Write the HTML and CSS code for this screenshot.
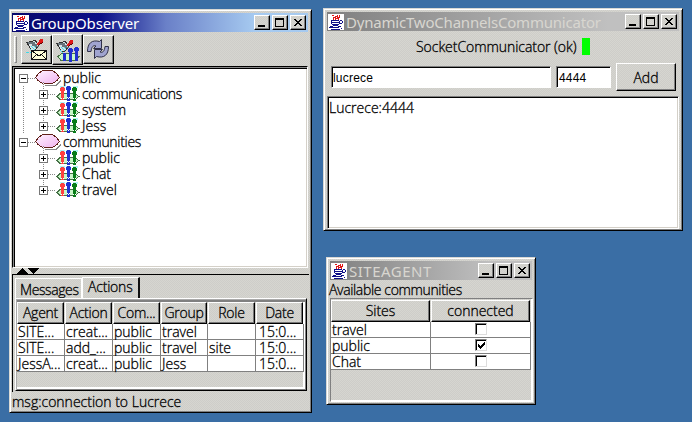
FILE: index.html
```html
<!DOCTYPE html>
<html lang="en">
<head>
<meta charset="utf-8">
<title>GroupObserver</title>
<link rel="stylesheet" href="styles.css">
</head>
<body>
<svg class="defs" aria-hidden="true">
  <symbol id="java" viewBox="0 0 16 16">
    <path fill="#fff" d="M0 0h16v16H0z"/>
    <path fill="none" stroke="#e01818" d="M5 5.5V3.5h2v-1h2v-2M7 5.5v-1h2v-1h2v-3M4 1.5h2M10 5.5v-1h1"/>
    <path fill="none" stroke="#101088" d="M3 6.5h8M3.5 7v3M4 8.5h7M11.500 7v3M4 10.500h7M5 11.500h5M12 6.500h2M14.500 7v2M12 9.500h2M1.500 12.500h3M1 13.500h3M10 12.500h3M4 13.500h7M3 15.500h9M13 14.500h1"/>
  </symbol>
  <symbol id="min" viewBox="0 0 16 14"><path d="M4 9h7v2H4z"/></symbol>
  <symbol id="max" viewBox="0 0 16 14"><path fill-rule="evenodd" d="M3 2h9v9H3zM4 4h7v6H4z"/></symbol>
  <symbol id="close" viewBox="0 0 16 14"><path d="M4 3h2v1h1v1h2V4h1V3h2v1h-1v1h-1v1H9v1h1v1h1v1h1v1h-2V9H9V8H7v1H6v1H4V9h1V8h1V7h1V6H6V5H5V4H4z"/></symbol>
  <symbol id="oval" viewBox="0 0 26 16">
    <path fill="#888" d="M3 9l7 6h10l6-6v2l-5 5H11z"/>
    <path fill="url(#pink)" stroke="#602018" d="M.5 7.500C3 3.500 6 .5 10 .5H15C19 .5 22 3.500 24.500 7.500C22 11 19 13.500 15 13.500H10C6 13.500 3 11 .5 7.500z"/>
  </symbol>
  <linearGradient id="pink" x2="1" y2="1"><stop stop-color="#fff4ff"/><stop offset="1" stop-color="#efb0ef"/></linearGradient>
  <symbol id="group" viewBox="0 0 24 16">
    <path fill="#c8f8c8" stroke="#467046" d="M1 10.500l3-3h15l4 3-4 3H4z"/>
    <path fill="#b0f4f4" d="M4 0h5v2H4zM10 0h5v1h-5zM17 0h5v2h-5z"/>
    <path fill="#ff4040" d="M5 1h3v1h1v3H8v9H5V5H4V2h1z"/>
    <path fill="#2030d0" d="M11 0h3v1h1v3h-1v11h-3V4h-1V1h1z"/>
    <path fill="#087c18" d="M17 1h3v1h1v3h-1v10h-3V5h-1V2h1z"/>
    <path fill="#fff" d="M11 11h1v1h-1zM13 11h1v1h-1zM12 12h1v1h-1zM5 12h1v1H5zM7 12h1v1H7zM17 12h1v1h-1zM19 12h1v1h-1z"/>
  </symbol>
  <symbol id="brush" viewBox="0 0 22 22">
    <path fill="#d8e4e8" stroke="#333" d="M1 4.500L9 2.500L13 7L9 12L5 12z"/>
    <path fill="#68747c" d="M2 4h7v2h2v2h2v1H9V8H6V6H2z"/>
    <path stroke="#40d8e8" fill="none" d="M5 8l4 4M4 11l3 3M8 8l2 2"/>
    <path fill="#e01818" d="M11 5h1V4h1V2h1V1h3v3h-1v1h-2v1h-1v1h-2z"/>
    <path fill="#600" d="M16 4h1v1h-1zM14 5h2v1h-2zM13 6h1v1h-1z"/>
  </symbol>
  <symbol id="minus" viewBox="0 0 9 9"><path fill="#fff" stroke="#777" d="M.5.5h8v8h-8z"/><path d="M2 4h5v1H2z"/></symbol>
  <symbol id="plus" viewBox="0 0 9 9"><path fill="#fff" stroke="#777" d="M.5.5h8v8h-8z"/><path d="M2 4h5v1H2zM4 2h1v5H4z"/></symbol>
</svg>

<section class="window observer">
  <header class="titlebar"><svg class="java"><use href="#java"/></svg><h1 class="t-observer">GroupObserver</h1>
    <div class="controls"><button><svg><use href="#min"/></svg></button><button><svg><use href="#max"/></svg></button><button><svg><use href="#close"/></svg></button></div></header>
  <div class="toolbar">
    <i class="grip"></i>
    <button class="tool"><svg viewBox="0 0 30 28"><use href="#brush" x="5" y="3" width="22" height="22"/><path stroke="#40d8e8" d="M5 17.500h12" stroke-dasharray="3 1"/><path fill="#ffffd8" stroke="#111" d="M10.500 15.500h15v9h-15z"/><path fill="none" stroke="#111" d="M11 16l7 5 7-5M11 24l4-4M25 24l-4-4"/></svg></button>
    <button class="tool hover"><svg viewBox="0 0 30 28"><path fill="#c8f8c8" stroke="#467046" d="M6 20.500l4-3h13l4 3-3 4H9z"/><use href="#brush" x="4" y="3" width="22" height="22"/><path fill="#2030d0" d="M17 12h3v1h1v3h-1v10h-3V16h-1v-3h1zM23 11h3v1h1v3h-1v10h-3V15h-1v-3h1zM11 17h3v8h-3z"/></svg></button>
    <button class="tool"><svg class="refresh" viewBox="0 0 30 28"><g fill="#a0a4d0" stroke="#303048"><path id="swirl" d="M4.500 16.500C4.500 8 9 4.500 16.500 6.500L18.500 4.500V13.500H10.500L13 11C10 10 8.500 12 8 16.500z"/><use href="#swirl" transform="rotate(180 15 14)"/></g></svg></button>
  </div>
  <div class="tree">
    <div class="branch"><svg class="box"><use href="#minus"/></svg><i class="dots"></i><svg class="oval"><use href="#oval"/></svg><span>public</span></div>
    <div class="leaf"><i class="trunk"></i><svg class="box"><use href="#plus"/></svg><i class="dots"></i><svg class="people"><use href="#group"/></svg><span class="tight">communications</span></div>
    <div class="leaf"><i class="trunk"></i><svg class="box"><use href="#plus"/></svg><i class="dots"></i><svg class="people"><use href="#group"/></svg><span>system</span></div>
    <div class="leaf"><i class="trunk"></i><svg class="box"><use href="#plus"/></svg><i class="dots"></i><svg class="people"><use href="#group"/></svg><span>Jess</span></div>
    <div class="branch"><svg class="box"><use href="#minus"/></svg><i class="dots"></i><svg class="oval"><use href="#oval"/></svg><span class="tight">communities</span></div>
    <div class="leaf"><i class="trunk none"></i><svg class="box"><use href="#plus"/></svg><i class="dots"></i><svg class="people"><use href="#group"/></svg><span>public</span></div>
    <div class="leaf"><i class="trunk none"></i><svg class="box"><use href="#plus"/></svg><i class="dots"></i><svg class="people"><use href="#group"/></svg><span>Chat</span></div>
    <div class="leaf"><i class="trunk none"></i><svg class="box"><use href="#plus"/></svg><i class="dots"></i><svg class="people"><use href="#group"/></svg><span>travel</span></div>
  </div>
  <div class="divider"><svg viewBox="0 0 27 7"><path d="M3 6h12L9 0zM14 0h12l-6 6z"/></svg></div>
  <div class="lower">
    <nav class="tabs"><span class="tab">Messages</span><span class="tab active">Actions</span></nav>
    <div class="pane">
      <div class="grid actions">
        <b>Agent</b><b>Action</b><b>Com...</b><b>Group</b><b>Role</b><b>Date</b>
        <span>SITE...</span><span>creat...</span><span>public</span><span>travel</span><span></span><span>15:0...</span>
        <span>SITE...</span><span>add_...</span><span>public</span><span>travel</span><span>site</span><span>15:0...</span>
        <span>JessA...</span><span>creat...</span><span>public</span><span>Jess</span><span></span><span>15:0...</span>
      </div>
    </div>
  </div>
  <footer class="status">msg:connection to Lucrece</footer>
</section>

<section class="window communicator">
  <header class="titlebar inactive"><svg class="java"><use href="#java"/></svg><h1 class="t-communicator">DynamicTwoChannelsCommunicator</h1>
    <div class="controls"><button><svg><use href="#min"/></svg></button><button><svg><use href="#max"/></svg></button><button><svg><use href="#close"/></svg></button></div></header>
  <div class="state"><span>SocketCommunicator (ok)</span><i></i></div>
  <div class="form"><div class="field host">lucrece</div><div class="field port">4444</div><button class="add">Add</button></div>
  <div class="log">Lucrece:4444</div>
</section>

<section class="window site">
  <header class="titlebar inactive"><svg class="java"><use href="#java"/></svg><h1 class="t-site">SITEAGENT</h1>
    <div class="controls"><button><svg><use href="#min"/></svg></button><button><svg><use href="#max"/></svg></button><button><svg><use href="#close"/></svg></button></div></header>
  <div class="caption">Available communities</div>
  <div class="sitepane">
    <div class="grid sites">
      <b>Sites</b><b>connected</b>
      <span>travel</span><span class="center"><i class="check"></i></span>
      <span>public</span><span class="center"><i class="check"><svg viewBox="0 0 9 9"><path d="M1 3h1v1h1v1h1V4h1V3h1V2h1V1h1v3H7v1H6v1H5v1H4v1H3V7H2V6H1z"/></svg></i></span>
      <span>Chat</span><span class="center"><i class="check"></i></span>
    </div>
  </div>
</section>
</body>
</html>
```
FILE: styles.css
```css
* { box-sizing: border-box; }
body {
  margin: 0;
  width: 692px;
  height: 422px;
  overflow: hidden;
  position: relative;
  background: #3a6ea5;
  color: #000;
  font: 300 14px/16px "Open Sans", "Noto Sans", sans-serif;
  -webkit-text-stroke: .3px;
  white-space: nowrap;
}
svg { display: block; flex: none; shape-rendering: crispEdges; }
.defs { position: absolute; width: 0; height: 0; }
button { font: inherit; padding: 0; color: #000; }
.tight { letter-spacing: -.3px; }

.window, .grid b, .tab, button {
  background: repeating-conic-gradient(#d6d6d0 0 25%, #cecdc9 0 50%) 0 0 / 2px 2px;
}
.window {
  position: absolute;
  border: 1px solid;
  border-color: #d8d8d4 #000 #000 #d8d8d4;
  box-shadow: inset 1px 1px #fff, inset -1px -1px #808080;
  padding: 3px 2px 2px;
  display: flex;
  flex-direction: column;
}
.observer { left: 9px; top: 9px; width: 303px; height: 404px; }
.communicator { left: 323px; top: 8px; width: 360px; height: 223px; padding-left: 3px; }
.site { left: 326px; top: 257px; width: 210px; height: 148px; padding-left: 3px; }

.titlebar {
  flex: none;
  height: 19px;
  margin-right: 1px;
  display: flex;
  align-items: center;
  background: linear-gradient(90deg, #08086c, #0c1088 30%, #6a80c8 52%, #a6caf0 82%);
  color: #fff;
  padding: 0 2px 0 1px;
}
.inactive { background: linear-gradient(90deg, #808080, #c0c0c0 80%); color: #d8d6d0; }
.java { width: 16px; height: 16px; }
h1 { margin: 0 0 0 2px; font: 400 15px/18px "Noto Sans", sans-serif; -webkit-text-stroke: 0; }
.t-observer { letter-spacing: -.1px; }
.t-communicator { letter-spacing: -.2px; }
.t-site { letter-spacing: .5px; }
.controls { margin-left: auto; display: flex; gap: 2px; }
.controls button {
  width: 16px; height: 15px;
  border: 1px solid; border-color: #fff #000 #000 #fff;
  box-shadow: inset -1px -1px #808080;
}
.controls svg { width: 16px; height: 14px; margin: -1px; }

.toolbar { flex: none; height: 34px; padding: 2px 0 0 2px; display: flex; }
.grip { width: 3px; height: 27px; margin: 2px 4px 0 0; border: 1px solid; border-color: #fff #888 #888 #fff; }
.tool {
  width: 31px; height: 29px; margin-top: 1px;
  border: 1px solid; border-color: #fff #000 #000 #fff;
  box-shadow: inset -1px -1px #808080;
}
.tool.hover { height: 31px; margin-top: 0; padding-top: 1px; }
.tool svg { width: 30px; height: 28px; margin: -1px 0 0 -1px; }
.tool .refresh { margin: -2px 0 0 -1px; shape-rendering: auto; }

.tree {
  flex: none; height: 202px; margin-right: 1px;
  border: solid; border-width: 1px;
  border-color: #000 #fff #fff #000;
  box-shadow: inset 1px 1px #888, inset 2px 2px #000, inset -1px -1px #d4d0c8;
  background: #fff;
  padding: 3px 0 0 6px;
}
.branch, .leaf { display: flex; height: 16px; align-items: center; position: relative; }
.box { width: 9px; height: 9px; }
.dots { width: 7px; height: 1px; background: repeating-linear-gradient(90deg, #888 0 1px, #fff 1px 2px); }
.oval { width: 26px; height: 16px; }
.branch span, .leaf span { margin-left: 2px; }
.people { width: 24px; height: 16px; }
.leaf .dots { width: 8px; }
.trunk { width: 20px; height: 16px; background: repeating-linear-gradient(#888 0 1px, #fff 1px 2px) 4px 0 / 1px 16px no-repeat; }
.trunk.none { background: none; }
.leaf::before { content: ""; position: absolute; left: 24px; top: -4px; width: 1px; height: 7px; background: repeating-linear-gradient(#888 0 1px, #fff 1px 2px); }

.divider { flex: none; height: 6px; }
.divider svg { width: 27px; height: 7px; margin-left: 1px; }
.lower {
  flex: none; height: 118px;
  border-top: 1px solid #000; border-left: 1px solid #000;
  display: flex; flex-direction: column;
  padding: 2px 2px 1px 2px;
}
.tabs { display: flex; height: 21px; align-items: flex-end; }
.tab { width: 67px; height: 20px; border: 1px solid #fff; border-bottom: 0; padding: 3px 0 0 4px; letter-spacing: -.4px; }
.tab.active { width: 58px; height: 21px; border-right: 2px solid #111; padding: 1px 0 0 5px; letter-spacing: -.2px; }
.pane {
  height: 93px;
  border: 1px solid; border-color: #fff #000 #000 #fff;
  box-shadow: inset 1px 1px #aaa, inset 0 3px #808080, inset -1px -1px #808080, inset -3px -3px #fff;
  padding: 3px 0 0 1px;
}
.grid { display: grid; }
.grid b {
  font-weight: 300; text-align: center; line-height: 20px;
  border: 1px solid; border-color: #fff #000 #000 #fff;
  box-shadow: inset -1px -1px #777;
  margin-right: 1px;
}
.grid span { background: #fff; border: 1px solid #808080; border-width: 0 1px 1px 0; padding-left: 1px; line-height: 16px; }
.actions { grid-template-columns: 48px 48px 48px 47px 48px 48px; grid-template-rows: 22px 16px 16px 16px; width: 287px; }
.actions b { letter-spacing: -.25px; }
.actions span:nth-child(6n) { padding-left: 3px; }
.status { height: 20px; line-height: 20px; }

.state { flex: none; height: 31px; display: flex; justify-content: center; align-items: center; padding-right: 4px; }
.state span { width: 163px; text-align: right; letter-spacing: -.05px; }
.state i { width: 8px; height: 17px; margin-left: 5px; background: #00ff00; }
.form { flex: none; height: 34px; display: flex; align-items: flex-start; padding-left: 4px; padding-top: 1px; }
.field {
  height: 22px; margin-top: 3px; padding: 3px 0 0 1px; background: #fff;
  border: 1px solid; border-color: #808080 #fff #fff #808080;
  box-shadow: inset 1px 1px #000;
  font: 12px/16px "Liberation Sans", sans-serif; letter-spacing: .2px;
  -webkit-text-stroke: 0;
}
.host { width: 220px; }
.port { width: 55px; margin-left: 5px; padding-left: 2px; }
.add { width: 60px; height: 28px; margin-left: 5px; border: 1px solid; border-color: #fff #000 #000 #fff; box-shadow: inset -1px -1px #808080; padding-top: 1px; }
.log {
  flex: none; height: 133px; margin: 0 1px 0 0; padding: 3px 0 0 1px; background: #fff;
  border: 1px solid; border-color: #808080 #fff #fff #808080;
  box-shadow: inset 1px 1px #000, inset -1px -1px #d4d0c8;
}
.caption { flex: none; height: 18px; line-height: 19px; margin-left: -1px; letter-spacing: -.35px; }
.sitepane {
  flex: none; height: 104px; padding-top: 1px;
  border: 1px solid; border-color: #808080 #fff #fff #808080;
  box-shadow: inset -1px -1px #fff;
}
.sites { grid-template-columns: 100px 100px; grid-template-rows: 22px 16px 16px 16px; width: 200px; }
.center { display: flex; justify-content: center; }
.check { width: 12px; height: 12px; margin-top: 1px; border: 1px solid; border-color: #808080 #ddd #ddd #808080; box-shadow: inset 1px 1px #000; background: #fff; }
.check svg { width: 9px; height: 9px; margin: 1px; }
```
